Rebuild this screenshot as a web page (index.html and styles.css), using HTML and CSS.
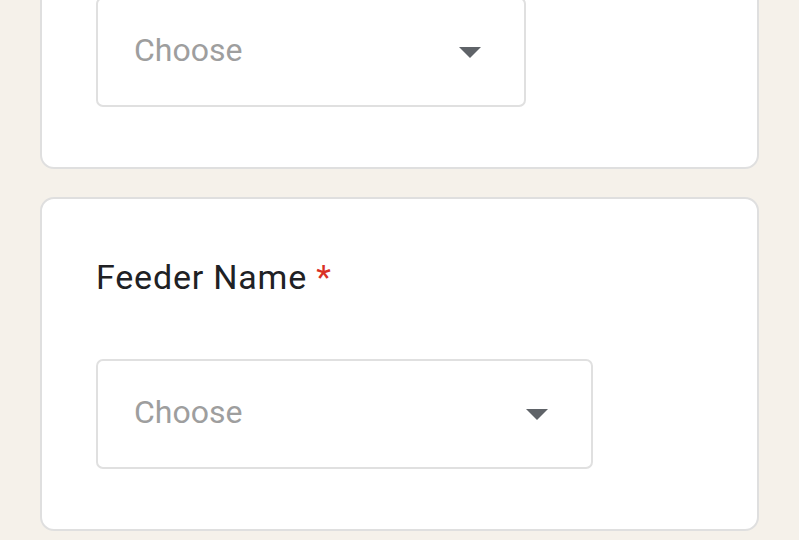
FILE: index.html
```html
<!DOCTYPE html>
<html lang="en">
<head>
    <meta charset="UTF-8">
    <meta name="viewport" content="width=device-width, initial-scale=1.0">
    <title>Feeder Form</title>
    <link rel="stylesheet" href="styles.css">
</head>
<body>
    <div class="form">
        <!-- Previous question, scrolled mostly out of view -->
        <div class="card">
            <div class="dropdown dropdown-short">
                <span class="placeholder">Choose</span>
                <span class="arrow"></span>
            </div>
        </div>

        <div class="card">
            <h2 class="question">Feeder Name <span class="required">*</span></h2>
            <div class="dropdown dropdown-wide">
                <span class="placeholder">Choose</span>
                <span class="arrow"></span>
            </div>
        </div>
    </div>
</body>
</html>
```

FILE: styles.css
```css
* {
    margin: 0;
    padding: 0;
    box-sizing: border-box;
}

body {
    background-color: #f5f1ea;
    font-family: Roboto, "Noto Sans", Arial, sans-serif;
    overflow: hidden;
}

.form {
    display: flex;
    flex-direction: column;
    gap: 28px;
    margin-top: -63px;
    padding: 0 40px;
}

.card {
    background-color: #fff;
    border: 2px solid #dfdfdf;
    border-radius: 14px;
    padding: 58px 54px 60px;
}

.question {
    font-size: 34px;
    font-weight: 400;
    letter-spacing: 0.8px;
    color: #202124;
    line-height: 40px;
    margin: 0 0 62px;
}

.required {
    color: #d93025;
}

.dropdown {
    display: flex;
    align-items: center;
    justify-content: space-between;
    height: 110px;
    padding: 0 43px 0 36px;
    border: 2px solid #e0e0e0;
    border-radius: 7px;
}

.dropdown-short {
    width: 430px;
}

.dropdown-wide {
    width: 497px;
}

.placeholder {
    font-size: 32px;
    color: #9e9e9e;
    margin-top: -4px;
}

.arrow {
    width: 0;
    height: 0;
    border-left: 11px solid transparent;
    border-right: 11px solid transparent;
    border-top: 11px solid #5f6368;
}
```
